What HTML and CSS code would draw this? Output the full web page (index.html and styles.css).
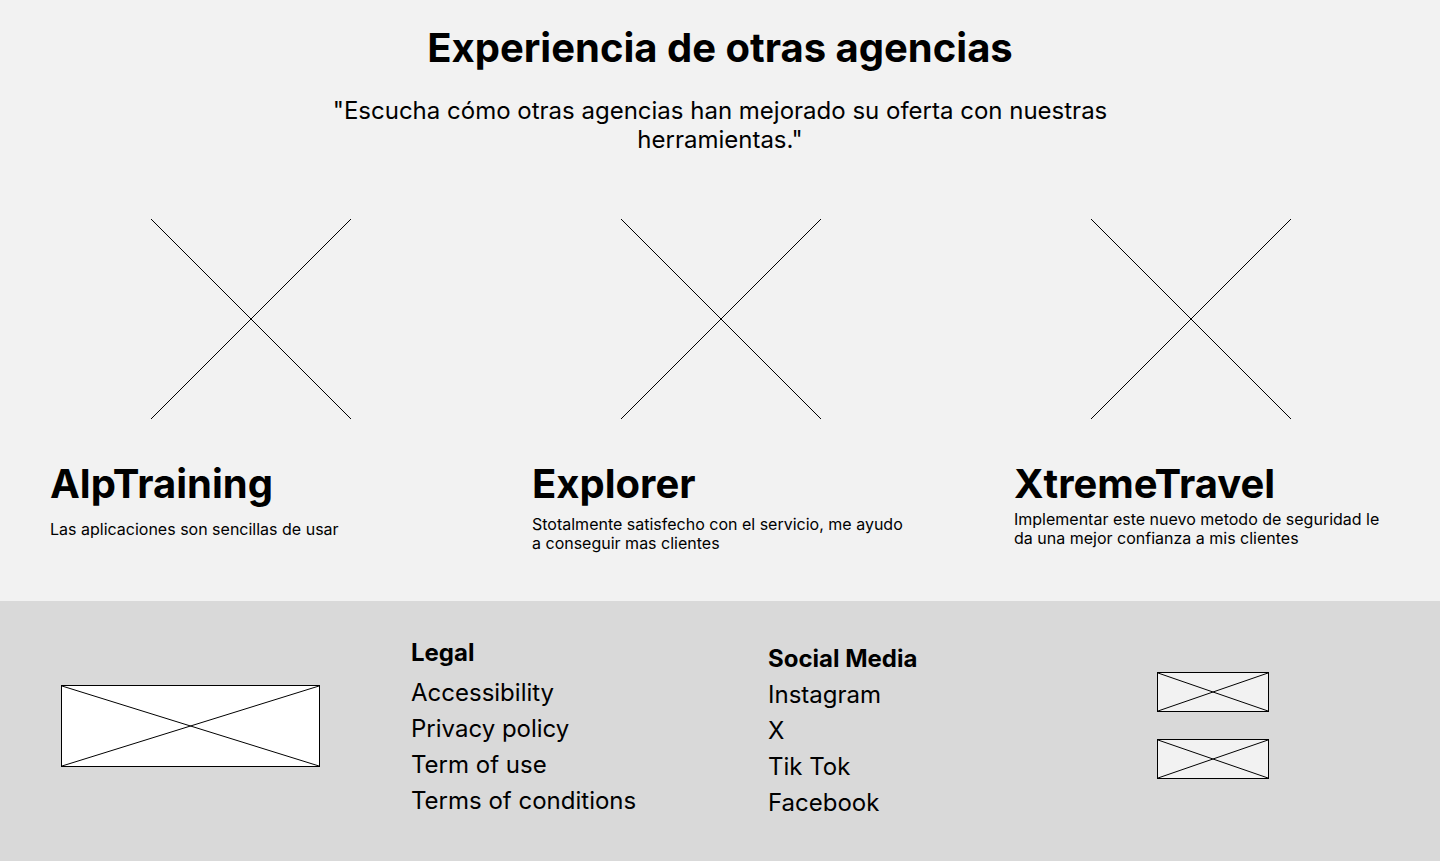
FILE: index.html
```html
<!DOCTYPE html>
<html lang="es">
<head>
    <meta charset="UTF-8">
    <meta name="viewport" content="width=device-width, initial-scale=1.0">
    <title>Experiencia de otras agencias</title>
    <link rel="stylesheet" href="styles.css">
</head>
<body>
    <section class="testimonials">
        <h1>Experiencia de otras agencias</h1>
        <p class="subtitle">"Escucha cómo otras agencias han mejorado su oferta con nuestras herramientas."</p>

        <div class="photo-row">
            <div class="photo">
                <svg width="200" height="200" viewBox="0 0 200 200"><line x1="0" y1="0" x2="200" y2="200"/><line x1="200" y1="0" x2="0" y2="200"/></svg>
            </div>
            <div class="photo">
                <svg width="200" height="200" viewBox="0 0 200 200"><line x1="0" y1="0" x2="200" y2="200"/><line x1="200" y1="0" x2="0" y2="200"/></svg>
            </div>
            <div class="photo">
                <svg width="200" height="200" viewBox="0 0 200 200"><line x1="0" y1="0" x2="200" y2="200"/><line x1="200" y1="0" x2="0" y2="200"/></svg>
            </div>
        </div>

        <div class="quote-row">
            <div class="quote">
                <h2>AlpTraining</h2>
                <p class="quote-text low">Las aplicaciones son sencillas de usar</p>
            </div>
            <div class="quote">
                <h2>Explorer</h2>
                <p class="quote-text">Stotalmente satisfecho con el servicio, me ayudo a conseguir mas clientes</p>
            </div>
            <div class="quote">
                <h2>XtremeTravel</h2>
                <p class="quote-text high">Implementar este nuevo metodo de seguridad le da una mejor confianza a mis clientes</p>
            </div>
        </div>
    </section>

    <footer class="footer">
        <div class="footer-logo">
            <div class="placeholder logo-box">
                <svg viewBox="0 0 100 100" preserveAspectRatio="none"><line x1="0" y1="0" x2="100" y2="100"/><line x1="100" y1="0" x2="0" y2="100"/></svg>
            </div>
        </div>

        <div class="footer-col legal">
            <h3>Legal</h3>
            <a href="#">Accessibility</a>
            <a href="#">Privacy policy</a>
            <a href="#">Term of use</a>
            <a href="#">Terms of conditions</a>
        </div>

        <div class="footer-col social">
            <h3>Social Media</h3>
            <a href="#">Instagram</a>
            <a href="#">X</a>
            <a href="#">Tik Tok</a>
            <a href="#">Facebook</a>
        </div>

        <div class="badges">
            <div class="placeholder badge">
                <svg viewBox="0 0 100 100" preserveAspectRatio="none"><line x1="0" y1="0" x2="100" y2="100"/><line x1="100" y1="0" x2="0" y2="100"/></svg>
            </div>
            <div class="placeholder badge">
                <svg viewBox="0 0 100 100" preserveAspectRatio="none"><line x1="0" y1="0" x2="100" y2="100"/><line x1="100" y1="0" x2="0" y2="100"/></svg>
            </div>
        </div>
    </footer>
</body>
</html>
```

FILE: styles.css
```css
body {
  font-family: Inter, 'Noto Sans', sans-serif;
  margin: 0;
  background-color: #f2f2f2;
  color: #000;
}

.testimonials {
  padding: 24px 0 0;
  height: 601px;
  box-sizing: border-box;
}

h1 {
  text-align: center;
  font-size: 40px;
  line-height: 48px;
  font-weight: 700;
  margin: 0;
}

.subtitle {
  max-width: 790px;
  margin: 24px auto 0;
  text-align: center;
  font-size: 24px;
  line-height: 29px;
}

.photo-row {
  display: grid;
  grid-template-columns: 470px 470px 470px;
  padding-left: 16px;
  margin-top: 65px;
}

.photo {
  display: flex;
  justify-content: center;
}

.photo svg,
.placeholder svg {
  display: block;
  stroke: #000;
  stroke-width: 1;
}

.placeholder svg {
  width: 100%;
  height: 100%;
}

.placeholder line {
  vector-effect: non-scaling-stroke;
}

.quote-row {
  display: grid;
  grid-template-columns: 482px 482px 1fr;
  padding-left: 50px;
  margin-top: 41px;
}

.quote h2 {
  font-size: 40px;
  line-height: 48px;
  font-weight: 700;
  margin: 0;
}

.quote-text {
  max-width: 376px;
  font-size: 16px;
  line-height: 19px;
  margin: 7px 0 0;
}

.quote-text.low {
  margin-top: 12px;
}

.quote-text.high {
  margin-top: 2px;
}

.footer {
  background-color: #d9d9d9;
  height: 260px;
  display: flex;
  align-items: center;
  padding-left: 61px;
}

.footer-logo {
  width: 350px;
  margin-bottom: 10px;
}

.placeholder {
  border: 1px solid #000;
  box-sizing: border-box;
}

.logo-box {
  width: 259px;
  height: 82px;
  background-color: #fff;
}

.footer-col {
  display: flex;
  flex-direction: column;
}

.footer-col h3 {
  font-size: 24px;
  line-height: 28px;
  font-weight: 700;
  margin: 0 0 8px;
}

.footer-col a {
  color: #000;
  text-decoration: none;
  font-size: 24px;
  line-height: 36px;
}

.legal {
  width: 357px;
  margin-top: -5px;
}

.social {
  width: 389px;
  margin-top: 3px;
}

.social h3 {
  margin-bottom: 4px;
}

.badges {
  display: flex;
  flex-direction: column;
  gap: 27px;
  margin-bottom: 12px;
}

.badge {
  width: 112px;
  height: 40px;
  background-color: #f2f2f2;
}
```
